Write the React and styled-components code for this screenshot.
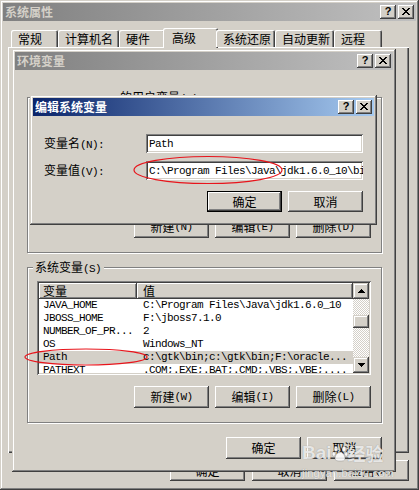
import React from "react";
import styled, { createGlobalStyle, css } from "styled-components";

const CJK = `"Noto Sans CJK SC", "Noto Sans CJK JP", sans-serif`;

const Global = createGlobalStyle`
  * { box-sizing: border-box; }
  html, body { margin: 0; padding: 0; background: #d4d0c8; }
  body { font-family: ${CJK}; font-size: 12px; color: #000; }
`;

const mono = css`
  font-family: "Liberation Mono", "Noto Sans CJK SC", monospace;
  font-size: 11px;
  letter-spacing: -0.6px;
`;

const winFrame = css`
  box-shadow: inset -1px -1px 0 #404040, inset 1px 1px 0 #d4d0c8,
    inset -2px -2px 0 #808080, inset 2px 2px 0 #fff;
`;
const raised = css`
  box-shadow: inset -1px -1px 0 #404040, inset 1px 1px 0 #fff,
    inset -2px -2px 0 #808080;
`;
const sunken = css`
  box-shadow: inset 1px 1px 0 #808080, inset -1px -1px 0 #fff,
    inset 2px 2px 0 #404040, inset -2px -2px 0 #d4d0c8;
`;

const Desktop = styled.div`
  position: relative;
  width: 419px;
  height: 490px;
  overflow: hidden;
  background: #d4d0c8;
`;

const Window = styled.div`
  display: flex;
  flex-direction: column;
  width: ${(p) => p.$w}px;
  height: ${(p) => p.$h}px;
  padding: 3px;
  background: #d4d0c8;
  ${winFrame}
  ${(p) =>
    p.$x !== undefined &&
    css`
      position: absolute;
      left: ${p.$x}px;
      top: ${p.$y}px;
    `}
`;

const TitleBar = styled.div`
  display: flex;
  align-items: center;
  flex: none;
  height: 18px;
  padding: 0 2px;
  background: ${(p) =>
    p.$active
      ? "linear-gradient(to right, #0a246a, #a6caf0)"
      : "linear-gradient(to right, #808080, #c0c0c0)"};
`;

const TitleText = styled.div`
  flex: 1;
  font: bold 12px/18px ${CJK};
  color: ${(p) => (p.$active ? "#fff" : "#d4d0c8")};
  white-space: nowrap;
  overflow: hidden;
`;

const CapBtn = styled.div`
  width: 16px;
  height: 14px;
  flex: none;
  margin-left: ${(p) => (p.$close ? 2 : 0)}px;
  background: #d4d0c8;
  ${raised}
  display: flex;
  align-items: center;
  justify-content: center;
  padding-bottom: 1px;
  font: bold 11px/1 "Liberation Sans", sans-serif;
  color: #000;
`;

const A = styled.span`
  ${mono}
`;

const PropsBody = styled.div`
  flex: 1;
  display: flex;
  flex-direction: column;
  padding: 7px 7px 6px 5px;
`;

const TabRow = styled.div`
  display: flex;
  align-items: flex-end;
  height: 19px;
  padding-left: 3px;
  position: relative;
  z-index: 1;
  flex: none;
`;

const Tab = styled.div`
  flex: none;
  width: ${(p) => (p.$sel ? p.$w + 4 : p.$w)}px;
  height: ${(p) => (p.$sel ? 20 : 17)}px;
  margin: ${(p) => (p.$sel ? "0 -2px -1px" : "0")};
  background: #d4d0c8;
  border-radius: 2px 2px 0 0;
  box-shadow: inset 1px 1px 0 #fff, inset -1px 0 0 #404040,
    inset -2px 0 0 #808080;
  padding: ${(p) => (p.$sel ? "3px 0 0 9px" : "2px 0 0 7px")};
  font: 12px/14px ${CJK};
  white-space: nowrap;
`;

const TabPanel = styled.div`
  flex: 1;
  background: #d4d0c8;
  box-shadow: inset 1px 1px 0 #fff, inset -1px -1px 0 #404040,
    inset -2px -2px 0 #808080;
`;

const ButtonRow = styled.div`
  display: flex;
  justify-content: flex-end;
  flex: none;
  gap: ${(p) => p.$gap ?? 6}px;
  margin-top: ${(p) => p.$mt ?? 0}px;
`;

const Button = styled.div`
  width: 75px;
  height: ${(p) => p.$h ?? 22}px;
  flex: none;
  background: #d4d0c8;
  ${raised}
  display: flex;
  align-items: center;
  justify-content: center;
  font: 12px/14px ${CJK};
  white-space: nowrap;
  ${(p) =>
    p.$default &&
    css`
      box-shadow: inset 0 0 0 1px #000, inset -2px -2px 0 #404040,
        inset 2px 2px 0 #fff, inset -3px -3px 0 #808080;
    `}
`;

const EnvBody = styled.div`
  flex: 1;
  display: flex;
  flex-direction: column;
  padding: 27px 11px 0 12px;
`;

const Group = styled.div`
  position: relative;
  height: 156px;
  flex: none;
  border: 1px solid #808080;
  box-shadow: inset 1px 1px 0 #fff, 1px 1px 0 #fff;
  padding: 13px 10px 0 9px;
  display: flex;
  flex-direction: column;
  margin-top: ${(p) => p.$mt ?? 0}px;
`;

const Legend = styled.div`
  position: absolute;
  top: -8px;
  left: ${(p) => p.$left ?? 5}px;
  padding: 0 3px 0 2px;
  background: #d4d0c8;
  font: 12px/14px ${CJK};
  white-space: nowrap;
`;

const ListBox = styled.div`
  height: 94px;
  flex: none;
  padding: 2px;
  background: #fff;
  ${sunken}
  display: flex;
`;

const ListMain = styled.div`
  flex: 1;
  min-width: 0;
  display: flex;
  flex-direction: column;
  overflow: hidden;
`;

const HeaderRow = styled.div`
  display: grid;
  grid-template-columns: 98px 1fr;
  height: 16px;
  flex: none;
`;

const HeaderCell = styled.div`
  background: #d4d0c8;
  ${raised}
  padding-left: ${(p) => p.$pad}px;
  font: 12px/16px ${CJK};
  white-space: nowrap;
  overflow: hidden;
`;

const Row = styled.div`
  display: grid;
  grid-template-columns: 98px 1fr;
  height: 13px;
  flex: none;
  line-height: 13px;
  background: ${(p) => (p.$sel ? "#d4d0c8" : "transparent")};
  ${mono}
`;

const Cell = styled.div`
  padding-left: ${(p) => p.$pad}px;
  white-space: nowrap;
  overflow: hidden;
`;

const ScrollBar = styled.div`
  width: 16px;
  flex: none;
  display: flex;
  flex-direction: column;
`;

const ScrollBtn = styled.div`
  height: 16px;
  flex: none;
  background: #d4d0c8;
  ${winFrame}
  display: flex;
  align-items: center;
  justify-content: center;
`;

const Track = styled.div`
  flex: 1;
  display: flex;
  flex-direction: column;
  padding-top: 16px;
  background: repeating-conic-gradient(#fff 0 25%, #d4d0c8 0 50%) 0 0 / 2px
    2px;
`;

const Thumb = styled.div`
  height: 13px;
  flex: none;
  background: #d4d0c8;
  ${winFrame}
`;

const EditBody = styled.div`
  flex: 1;
  display: flex;
  flex-direction: column;
  padding: 18px 11px 0 11px;
`;

const FieldRow = styled.div`
  display: grid;
  grid-template-columns: 102px 1fr;
  align-items: center;
  height: 19px;
  flex: none;
  margin-top: ${(p) => p.$mt ?? 0}px;
`;

const FieldLabel = styled.div`
  font: 12px/14px ${CJK};
  white-space: nowrap;
`;

const TextBox = styled.div`
  height: 19px;
  background: #fff;
  ${sunken}
  padding: 0 3px;
  display: flex;
  align-items: center;
  overflow: hidden;
  white-space: nowrap;
  ${mono}
`;

const Annot = styled.svg`
  position: absolute;
  left: 0;
  top: 0;
  pointer-events: none;
`;

const Watermark = styled.div`
  position: absolute;
  left: 302px;
  top: 441px;
  pointer-events: none;
  color: rgba(255, 255, 255, 0.8);
  text-shadow: 0 0 1px rgba(80, 80, 80, 0.55);
  display: flex;
  flex-direction: column;
`;

const WmLogo = styled.div`
  display: flex;
  align-items: center;
  height: 24px;
  white-space: nowrap;
`;

const WmBai = styled.span`
  font: bold 19px/24px "Liberation Sans", sans-serif;
`;

const WmJing = styled.span`
  font: bold 18px/24px ${CJK};
`;

const WmUrl = styled.div`
  font: 11px/12px "Liberation Sans", sans-serif;
  margin-top: 2px;
  letter-spacing: 0.2px;
`;

const CloseGlyph = () => (
  <svg width="8" height="7" viewBox="0 0 8 7" shapeRendering="crispEdges">
    <path
      d="M0 0h2v1H0zM6 0h2v1H6zM1 1h2v1H1zM5 1h2v1H5zM2 2h4v1H2zM3 3h2v1H3zM2 4h4v1H2zM1 5h2v1H1zM5 5h2v1H5zM0 6h2v1H0zM6 6h2v1H6z"
      fill="#000"
    />
  </svg>
);

const Arrow = ({ down }) => (
  <svg width="7" height="4" viewBox="0 0 7 4" shapeRendering="crispEdges">
    <path
      d={
        down
          ? "M0 0h7v1H0zM1 1h5v1H1zM2 2h3v1H2zM3 3h1v1H3z"
          : "M3 0h1v1H3zM2 1h3v1H2zM1 2h5v1H1zM0 3h7v1H0z"
      }
      fill="#000"
    />
  </svg>
);

const Paw = () => (
  <svg width="16" height="18" viewBox="0 0 16 18">
    <g fill="rgba(255,255,255,0.85)" stroke="rgba(90,90,90,0.5)" strokeWidth="0.6">
      <ellipse cx="4" cy="5" rx="2" ry="2.6" />
      <ellipse cx="12" cy="5" rx="2" ry="2.6" />
      <ellipse cx="1.8" cy="10" rx="1.7" ry="2.2" />
      <ellipse cx="14.2" cy="10" rx="1.7" ry="2.2" />
      <path d="M8 8c3 0 5 4 5 6.5S11 17 8 17 3 16.5 3 14.5 5 8 8 8z" />
    </g>
  </svg>
);

function Caption({ title, active }) {
  return (
    <TitleBar $active={active}>
      <TitleText $active={active}>{title}</TitleText>
      <CapBtn>?</CapBtn>
      <CapBtn $close>
        <CloseGlyph />
      </CapBtn>
    </TitleBar>
  );
}

const tabs = [
  { label: "常规", w: 47 },
  { label: "计算机名", w: 61 },
  { label: "硬件", w: 46 },
  { label: "高级", w: 51, sel: true },
  { label: "系统还原", w: 59 },
  { label: "自动更新", w: 59 },
  { label: "远程", w: 48 },
];

const sysVars = [
  ["JAVA_HOME", "C:\\Program Files\\Java\\jdk1.6.0_10"],
  ["JBOSS_HOME", "F:\\jboss7.1.0"],
  ["NUMBER_OF_PR...", "2"],
  ["OS", "Windows_NT"],
  ["Path", "c:\\gtk\\bin;c:\\gtk\\bin;F:\\oracle...", true],
  ["PATHEXT", ".COM;.EXE;.BAT;.CMD;.VBS;.VBE;...."],
];

const userVars = [
  ["TEMP", "%USERPROFILE%\\Local Settings\\Temp"],
  ["TMP", "%USERPROFILE%\\Local Settings\\Temp"],
];

function VarList({ rows }) {
  return (
    <ListBox>
      <ListMain>
        <HeaderRow>
          <HeaderCell $pad={4}>变量</HeaderCell>
          <HeaderCell $pad={6}>值</HeaderCell>
        </HeaderRow>
        {rows.map(([k, v, sel]) => (
          <Row key={k} $sel={sel}>
            <Cell $pad={4}>{k}</Cell>
            <Cell $pad={6}>{v}</Cell>
          </Row>
        ))}
      </ListMain>
      <ScrollBar>
        <ScrollBtn>
          <Arrow />
        </ScrollBtn>
        <Track>
          <Thumb />
        </Track>
        <ScrollBtn>
          <Arrow down />
        </ScrollBtn>
      </ScrollBar>
    </ListBox>
  );
}

export default function App() {
  return (
    <>
      <Global />
      <Desktop>
        <Window $w={419} $h={490}>
          <Caption title="系统属性" />
          <PropsBody>
            <TabRow>
              {tabs.map((t) => (
                <Tab key={t.label} $w={t.w} $sel={t.sel}>
                  {t.label}
                </Tab>
              ))}
            </TabRow>
            <TabPanel />
            <ButtonRow $mt={7} $gap={7}>
              <Button $h={21}>确定</Button>
              <Button $h={21}>取消</Button>
              <Button $h={21}>
                应用<A>(A)</A>
              </Button>
            </ButtonRow>
          </PropsBody>
        </Window>

        <Window $x={12} $y={49} $w={384} $h={423}>
          <Caption title="环境变量" />
          <EnvBody>
            <Group>
              <Legend $left={90}>
                的用户变量<A>(U)</A>
              </Legend>
              <VarList rows={userVars} />
              <ButtonRow $mt={11}>
                <Button>
                  新建<A>(N)</A>
                </Button>
                <Button>
                  编辑<A>(E)</A>
                </Button>
                <Button>
                  删除<A>(D)</A>
                </Button>
              </ButtonRow>
            </Group>
            <Group $mt={14}>
              <Legend>
                系统变量<A>(S)</A>
              </Legend>
              <VarList rows={sysVars} />
              <ButtonRow $mt={11}>
                <Button>
                  新建<A>(W)</A>
                </Button>
                <Button>
                  编辑<A>(I)</A>
                </Button>
                <Button>
                  删除<A>(L)</A>
                </Button>
              </ButtonRow>
            </Group>
            <ButtonRow $mt={14}>
              <Button>确定</Button>
              <Button>取消</Button>
            </ButtonRow>
          </EnvBody>
        </Window>

        <Window $x={30} $y={95} $w={347} $h={130}>
          <Caption title="编辑系统变量" active />
          <EditBody>
            <FieldRow>
              <FieldLabel>
                变量名<A>(N):</A>
              </FieldLabel>
              <TextBox>Path</TextBox>
            </FieldRow>
            <FieldRow $mt={8}>
              <FieldLabel>
                变量值<A>(V):</A>
              </FieldLabel>
              <TextBox>C:\Program Files\Java\jdk1.6.0_10\bin;</TextBox>
            </FieldRow>
            <ButtonRow $mt={11}>
              <Button $h={21} $default>
                确定
              </Button>
              <Button $h={21}>取消</Button>
            </ButtonRow>
          </EditBody>
        </Window>

        <Annot width="419" height="490" viewBox="0 0 419 490">
          <ellipse
            cx="208"
            cy="170"
            rx="74"
            ry="13.5"
            fill="none"
            stroke="#e8141b"
            strokeWidth="1.2"
          />
          <ellipse
            cx="86"
            cy="357"
            rx="61"
            ry="8"
            fill="none"
            stroke="#e8141b"
            strokeWidth="1.2"
          />
        </Annot>

        <Watermark>
          <WmLogo>
            <WmBai>Bai</WmBai>
            <Paw />
            <WmJing>经验</WmJing>
          </WmLogo>
          <WmUrl>jingyan.baidu.com</WmUrl>
        </Watermark>
      </Desktop>
    </>
  );
}
